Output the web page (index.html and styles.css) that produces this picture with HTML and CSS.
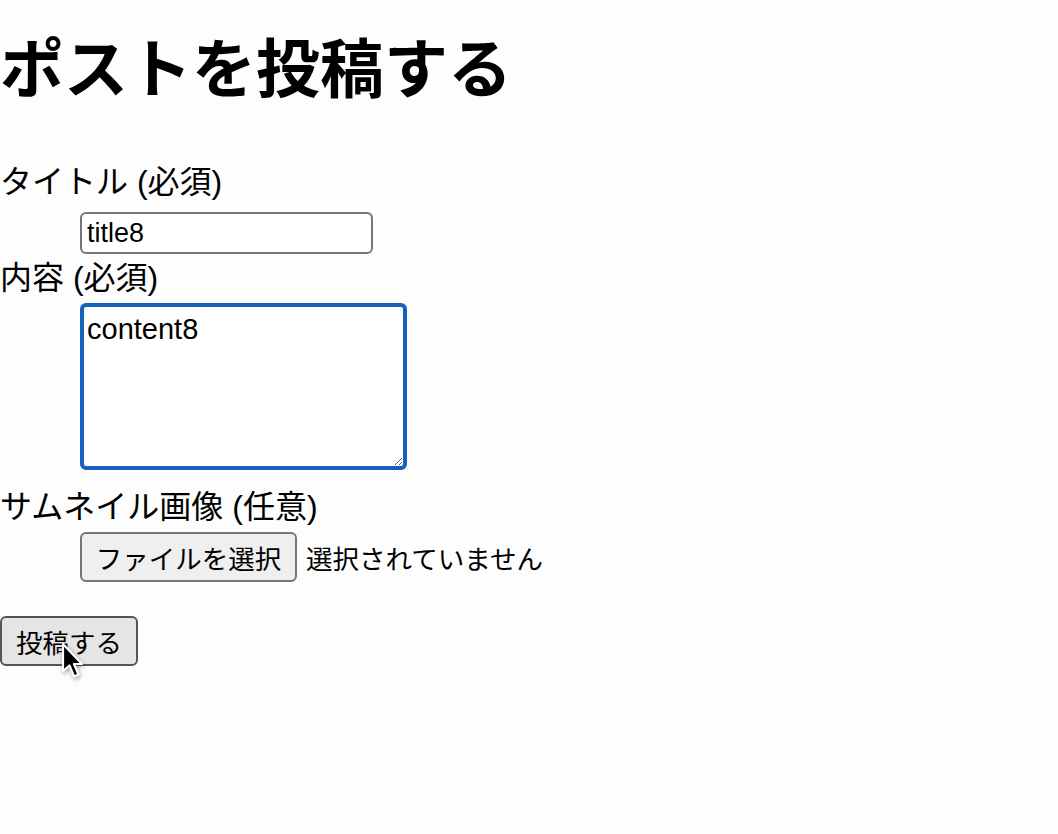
FILE: index.html
```html
<!DOCTYPE html>
<html lang="ja">
<head>
<meta charset="utf-8">
<title>ポストを投稿する</title>
<link rel="stylesheet" href="styles.css">
</head>
<body>
<h1 class="page-title">ポストを投稿する</h1>
<form class="post-form">
  <dl class="fields">
    <dt class="field-label">タイトル (必須)</dt>
    <dd class="field field-title"><input class="text-input" type="text" value="title8"></dd>
    <dt class="field-label">内容 (必須)</dt>
    <dd class="field field-content"><textarea class="text-area">content8</textarea></dd>
    <dt class="field-label">サムネイル画像 (任意)</dt>
    <dd class="field field-thumb">
      <span class="file-button">ファイルを選択</span>
      <span class="file-status">選択されていません</span>
    </dd>
  </dl>
  <div class="submit-row">
    <span class="submit-button">投稿する</span>
    <svg class="cursor" viewBox="0 0 22 38" aria-hidden="true">
      <path d="M2 2 L2 29 L8.5 23.5 L13 34.5 L17.5 32.5 L13 22 L21 22 Z" fill="#000" stroke="#fff" stroke-width="2.2" stroke-linejoin="round"/>
    </svg>
  </div>
</form>
</body>
</html>
```

FILE: styles.css
```css
html, body {
  background: #fdfdfd;
}
body {
  margin: 0;
  min-height: 834px;
  color: #000;
  font-family: "Liberation Sans", "Noto Sans CJK JP", sans-serif;
  font-size: 32px;
}
.page-title {
  margin: 33px 0 57px;
  font-size: 64px;
  line-height: 74px;
  font-weight: 700;
}
.post-form {
  margin: 0;
  padding-bottom: 80px;
}
.fields {
  margin: 0;
}
.field-label {
  margin: 0;
  line-height: 37px;
  font-size: 32px;
}
.field {
  margin: 0 0 0 80px;
}
.field-title {
  padding: 11px 0 6px;
}
.field-content {
  padding: 6px 0 19px;
}
.field-thumb {
  padding: 6px 0 0;
  display: flex;
  align-items: center;
  gap: 9px;
}
.text-input {
  display: block;
  box-sizing: border-box;
  width: 293px;
  height: 42px;
  margin: 0;
  padding: 0 5px;
  border: 2px solid #767676;
  border-radius: 6px;
  background: #fff;
  font-family: "Liberation Sans", "Noto Sans CJK JP", sans-serif;
  font-size: 27px;
  color: #000;
}
.text-area {
  display: block;
  box-sizing: border-box;
  width: 327px;
  height: 167px;
  margin: 0;
  padding: 5px 3px;
  border: 4px solid #1562be;
  border-radius: 6px;
  background: #fff;
  font-family: "Liberation Sans", "Noto Sans CJK JP", sans-serif;
  font-size: 29px;
  line-height: 34px;
  color: #000;
  resize: both;
  outline: none;
}
.file-button {
  box-sizing: border-box;
  display: flex;
  align-items: center;
  justify-content: center;
  width: 217px;
  height: 50px;
  border: 2px solid #767676;
  border-radius: 6px;
  background: #efefef;
  font-size: 26.5px;
  font-family: "Noto Sans CJK JP", sans-serif;
}
.file-status {
  font-size: 26.5px;
  font-family: "Noto Sans CJK JP", sans-serif;
}
.submit-row {
  position: relative;
  margin-top: 34px;
}
.submit-button {
  box-sizing: border-box;
  display: flex;
  align-items: center;
  justify-content: center;
  width: 138px;
  height: 50px;
  border: 2px solid #555;
  border-radius: 6px;
  background: #e5e5e5;
  font-size: 26.5px;
  font-family: "Noto Sans CJK JP", sans-serif;
}
.cursor {
  position: absolute;
  z-index: 10;
  left: 61px;
  top: 26px;
  width: 22px;
  height: 38px;
  overflow: visible;
  filter: drop-shadow(1px 2px 2px rgba(0, 0, 0, 0.35));
}
```
